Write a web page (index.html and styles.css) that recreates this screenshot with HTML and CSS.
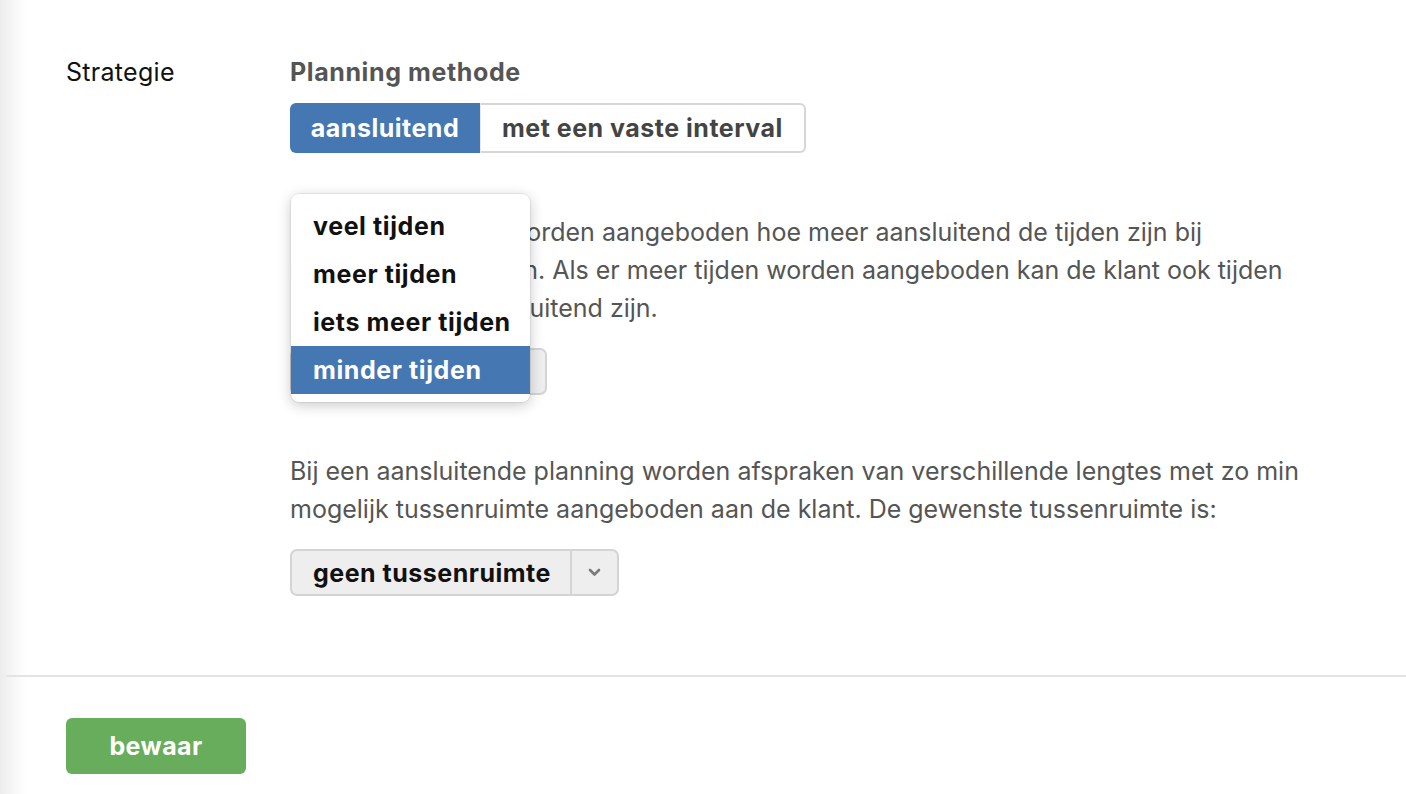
FILE: index.html
```html
<!DOCTYPE html>
<html lang="nl">
<head>
<meta charset="utf-8">
<title>Strategie</title>
<link rel="stylesheet" href="styles.css">
</head>
<body>
<div class="page">
  <div class="form">
    <div class="row">
      <div class="label">Strategie</div>
      <div class="field">
        <div class="field-title">Planning methode</div>
        <div class="segmented">
          <button class="seg seg-active">aansluitend</button>
          <button class="seg">met een vaste interval</button>
        </div>

        <div class="block block-first">
          <p class="text">Hoe minder tijden worden aangeboden hoe meer aansluitend de tijden zijn bij<br>de huidige afspraken. Als er meer tijden worden aangeboden kan de klant ook tijden<br>kiezen die niet aansluitend zijn.</p>
          <div class="select select-1">
            <span class="select-value">minder tijden</span>
            <span class="select-arrow"><svg width="13" height="9" viewBox="0 0 13 9"><path d="M2 2 L6.5 6.5 L11 2" fill="none" stroke="#7a7a7a" stroke-width="2.6" stroke-linecap="round" stroke-linejoin="round"/></svg></span>
          </div>
          <ul class="menu">
            <li class="menu-item">veel tijden</li>
            <li class="menu-item">meer tijden</li>
            <li class="menu-item">iets meer tijden</li>
            <li class="menu-item menu-item-active">minder tijden</li>
          </ul>
        </div>

        <div class="block">
          <p class="text">Bij een aansluitende planning worden afspraken van verschillende lengtes met zo min<br>mogelijk tussenruimte aangeboden aan de klant. De gewenste tussenruimte is:</p>
          <div class="select select-2">
            <span class="select-value">geen tussenruimte</span>
            <span class="select-arrow"><svg width="13" height="9" viewBox="0 0 13 9"><path d="M2 2 L6.5 6.5 L11 2" fill="none" stroke="#7a7a7a" stroke-width="2.6" stroke-linecap="round" stroke-linejoin="round"/></svg></span>
          </div>
        </div>
      </div>
    </div>
  </div>
  <hr class="divider">
  <div class="actions">
    <button class="btn-save">bewaar</button>
  </div>
</div>
</body>
</html>
```

FILE: styles.css
```css
html, body {
  margin: 0;
  padding: 0;
  background: #fff;
}
body {
  font-family: Inter, "Liberation Sans", Arial, sans-serif;
  font-size: 25px;
  color: #555;
}
.page {
  min-height: 794px;
  background: linear-gradient(to right, #ececec 0px, #f6f6f6 12px, #ffffff 26px);
  padding-top: 57px;
  box-sizing: border-box;
}
.form {
  padding-left: 66px;
}
.row {
  display: grid;
  grid-template-columns: 224px 1fr;
}
.label {
  color: #111;
  line-height: 30px;
  letter-spacing: 0.3px;
}
.field {
  position: relative;
}
.field-title {
  font-weight: 700;
  color: #555;
  line-height: 30px;
  letter-spacing: 0.6px;
}
.segmented {
  display: flex;
  margin-top: 16px;
  height: 50px;
}
.seg {
  font-family: inherit;
  font-size: 25px;
  font-weight: 700;
  letter-spacing: 0.5px;
  color: #444;
  background: #fff;
  border: 2px solid #d6d6d6;
  border-left: none;
  padding: 0 21px;
  margin: 0;
  border-radius: 0 6px 6px 0;
  height: 50px;
}
.seg-active {
  background: #4577b3;
  color: #fff;
  border: none;
  border-radius: 6px 0 0 6px;
  padding: 0;
  border-right: 1px solid #e8e8e8;
  width: 191px;
}
.block {
  position: relative;
  margin-top: 37px;
}
.block-first {
  margin-top: 60px;
}
.text {
  margin: 0;
  line-height: 38px;
  color: #555;
  white-space: nowrap;
}
.select {
  display: inline-flex;
  align-items: stretch;
  height: 47px;
  margin-top: 21px;
  background: #eee;
  border: 2px solid #d4d4d4;
  border-radius: 7px;
  box-sizing: border-box;
  color: #111;
  font-weight: 700;
  letter-spacing: 0.5px;
}
.select-value {
  display: flex;
  align-items: center;
  padding: 0 19px 0 21px;
  border-right: 2px solid #d4d4d4;
  white-space: nowrap;
}
.select-1 {
  width: 257px;
}
.select-1 .select-value {
  flex: 1;
}
.select-arrow {
  width: 45px;
  display: flex;
  align-items: center;
  justify-content: center;
}
.block + .block {
  margin-top: 57px;
}
.menu {
  position: absolute;
  left: 1px;
  top: -19px;
  width: 239px;
  margin: 0;
  padding: 8px 0;
  list-style: none;
  background: #fff;
  border-radius: 8px;
  box-shadow: 0 3px 14px rgba(0,0,0,0.22), 0 0 0 1px rgba(0,0,0,0.06);
}
.menu-item {
  height: 48px;
  line-height: 48px;
  padding-left: 22px;
  font-weight: 700;
  letter-spacing: 0.6px;
  color: #111;
  white-space: nowrap;
}
.menu-item-active {
  background: #4577b3;
  color: #fff;
}
.divider {
  border: none;
  height: 2px;
  background: #e4e4e4;
  margin: 79px 0 0 6px;
}
.actions {
  padding: 41px 0 0 66px;
}
.btn-save {
  font-family: inherit;
  font-size: 25px;
  font-weight: 700;
  letter-spacing: 0.4px;
  color: #fff;
  background: #68ad5c;
  border: none;
  border-radius: 6px;
  width: 180px;
  height: 56px;
}
```
